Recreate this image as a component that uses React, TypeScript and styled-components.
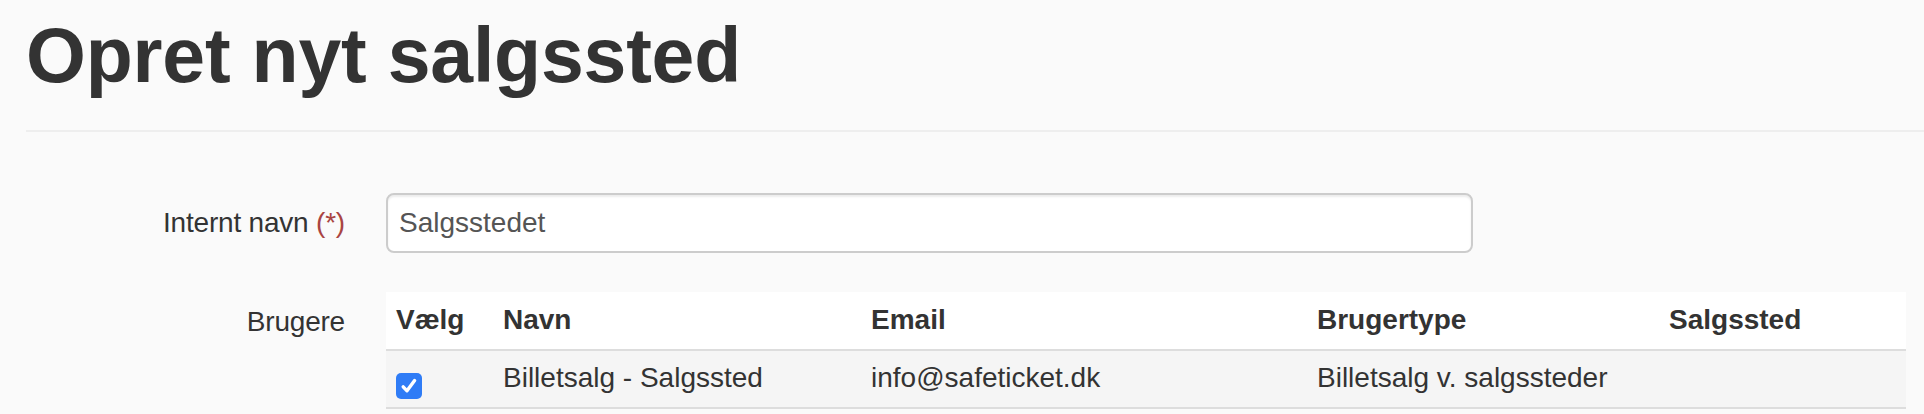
import React from "react";
import styled, { createGlobalStyle } from "styled-components";

const GlobalStyle = createGlobalStyle`
  html, body {
    margin: 0;
    padding: 0;
    background: #fafafa;
  }
  body {
    font-family: "Liberation Sans", Arial, Helvetica, sans-serif;
    color: #333333;
    font-size: 28px;
  }
  * { box-sizing: border-box; }
`;

const Page = styled.div`
  padding: 0 18px 0 26px;
`;

const Header = styled.header`
  padding: 13px 0 32px;
  border-bottom: 2px solid #eeeeee;
  margin-right: -18px;
`;

const Title = styled.h1`
  margin: 0;
  font-size: 77px;
  line-height: 85px;
  font-weight: 700;
  color: #333333;
  letter-spacing: -0.2px;
`;

const Form = styled.form`
  display: flex;
  flex-direction: column;
  gap: 39px;
  padding-top: 61px;
`;

const FormGroup = styled.div<{ $align: "center" | "start" }>`
  display: grid;
  grid-template-columns: 319px 1fr;
  column-gap: 41px;
  align-items: ${(p) => p.$align};
`;

const Label = styled.label<{ $pad?: number }>`
  text-align: right;
  font-size: 28px;
  line-height: 40px;
  color: #333333;
  letter-spacing: -0.2px;
  padding-top: ${(p) => p.$pad ?? 0}px;
`;

const Required = styled.span`
  color: #a94442;
`;

const TextInput = styled.input`
  width: 1087px;
  height: 60px;
  padding: 0 12px 0 11px;
  font-family: inherit;
  font-size: 28px;
  color: #555555;
  background: #ffffff;
  border: 2px solid #cccccc;
  border-radius: 8px;
  box-shadow: inset 0 2px 2px rgba(0, 0, 0, 0.075);
  outline: none;
`;

const Table = styled.table`
  width: 100%;
  border-collapse: collapse;
  table-layout: fixed;
  background: #ffffff;
`;

const HeadCell = styled.th<{ $w: number }>`
  width: ${(p) => p.$w}px;
  height: 58px;
  padding: 0 10px 2px;
  text-align: left;
  font-weight: 700;
  font-size: 28px;
  color: #333333;
  vertical-align: middle;
  border-bottom: 2px solid #dddddd;
`;

const BodyRow = styled.tr`
  background: #f5f5f5;
`;

const Cell = styled.td<{ $bottom?: boolean }>`
  height: 58px;
  padding: ${(p) => (p.$bottom ? "0 10px 8px" : "0 10px 2px")};
  font-size: 28px;
  color: #333333;
  vertical-align: ${(p) => (p.$bottom ? "bottom" : "middle")};
  border-bottom: 2px solid #dddddd;
  white-space: nowrap;
`;

const CheckBox = styled.span`
  width: 26px;
  height: 26px;
  border-radius: 5px;
  background: #2f7cf6;
  display: flex;
  align-items: center;
  justify-content: center;
`;

const columns = [
  { key: "v", label: "Vælg", w: 107 },
  { key: "n", label: "Navn", w: 368 },
  { key: "e", label: "Email", w: 446 },
  { key: "b", label: "Brugertype", w: 352 },
  { key: "s", label: "Salgssted", w: 247 },
];

export default function App() {
  return (
    <>
      <GlobalStyle />
      <Page>
        <Header>
          <Title>Opret nyt salgssted</Title>
        </Header>
        <Form onSubmit={(e) => e.preventDefault()}>
          <FormGroup $align="center">
            <Label htmlFor="internt-navn">
              Internt navn <Required>(*)</Required>
            </Label>
            <TextInput id="internt-navn" defaultValue="Salgsstedet" />
          </FormGroup>
          <FormGroup $align="start">
            <Label $pad={10}>Brugere</Label>
            <Table>
              <thead>
                <tr>
                  {columns.map((c) => (
                    <HeadCell key={c.key} $w={c.w}>
                      {c.label}
                    </HeadCell>
                  ))}
                </tr>
              </thead>
              <tbody>
                <BodyRow>
                  <Cell $bottom>
                    <CheckBox role="checkbox" aria-checked="true">
                      <svg width="20" height="20" viewBox="0 0 20 20">
                        <path
                          d="M4.2 10.8 L8 14.8 L15.6 4.6"
                          fill="none"
                          stroke="#ffffff"
                          strokeWidth="3.4"
                          strokeLinecap="round"
                          strokeLinejoin="round"
                        />
                      </svg>
                    </CheckBox>
                  </Cell>
                  <Cell>Billetsalg - Salgssted</Cell>
                  <Cell>info@safeticket.dk</Cell>
                  <Cell>Billetsalg v. salgssteder</Cell>
                  <Cell></Cell>
                </BodyRow>
              </tbody>
            </Table>
          </FormGroup>
        </Form>
      </Page>
    </>
  );
}
